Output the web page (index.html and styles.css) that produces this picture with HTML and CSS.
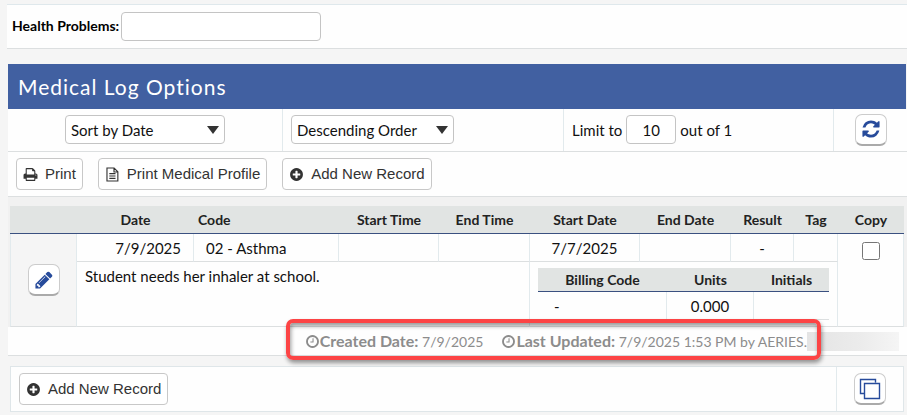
FILE: index.html
```html
<!DOCTYPE html>
<html lang="en">
  <head>
    <meta charset="utf-8" />
    <meta name="viewport" content="width=device-width, initial-scale=1" />
    <title>Medical Log</title>
    <link rel="stylesheet" href="styles.css">
  </head>
  <body>
    <svg class="sprite" width="0" height="0" aria-hidden="true">
      <symbol id="i-print" viewBox="0 0 1792 1792"><path d="M448 1536h896v-256h-896v256zm0-640h896v-384h-160q-40 0-68-28t-28-68v-160h-640v640zm1152 64q0-26-19-45t-45-19-45 19-19 45 19 45 45 19 45-19 19-45zm128 0v416q0 13-9.5 22.5t-22.5 9.5h-224v160q0 40-28 68t-68 28h-960q-40 0-68-28t-28-68v-160h-224q-13 0-22.5-9.5t-9.5-22.5v-416q0-79 56.5-135.5t135.5-56.5h64v-544q0-40 28-68t68-28h672q40 0 88 20t76 48l152 152q28 28 48 76t20 88v256h64q79 0 135.5 56.5t56.5 135.5z"/></symbol>
      <symbol id="i-plus" viewBox="0 0 1792 1792"><path d="M1344 960v-128q0-26-19-45t-45-19h-256v-256q0-26-19-45t-45-19h-128q-26 0-45 19t-19 45v256h-256q-26 0-45 19t-19 45v128q0 26 19 45t45 19h256v256q0 26 19 45t45 19h128q26 0 45-19t19-45v-256h256q26 0 45-19t19-45zm320-64q0 209-103 385.5t-279.5 279.5-385.5 103-385.5-103-279.5-279.5-103-385.5 103-385.5 279.5-279.5 385.5-103 385.5 103 279.5 279.5 103 385.5z"/></symbol>
      <symbol id="i-refresh" viewBox="0 0 1792 1792"><path d="M1639 1056q0 5-1 7-64 268-268 434.5t-478 166.5q-146 0-282.5-55t-243.5-157l-129 129q-19 19-45 19t-45-19-19-45v-448q0-26 19-45t45-19h448q26 0 45 19t19 45-19 45l-137 137q71 66 161 102t187 36q134 0 250-65t186-179q11-17 53-117 8-23 30-23h192q13 0 22.5 9.5t9.5 22.5zm25-800v448q0 26-19 45t-45 19h-448q-26 0-45-19t-19-45 19-45l138-138q-148-137-349-137-134 0-250 65t-186 179q-11 17-53 117-8 23-30 23h-199q-13 0-22.5-9.5t-9.5-22.5v-7q65-268 270-434.5t480-166.5q146 0 284 55.5t245 156.5l130-129q19-19 45-19t45 19 19 45z"/></symbol>
      <symbol id="i-pencil" viewBox="0 0 1792 1792"><path d="M491 1536l91-91-235-235-91 91v107h128v128h107zm523-928q0-22-22-22-10 0-17 7l-542 542q-7 7-7 17 0 22 22 22 10 0 17-7l542-542q7-7 7-17zm-54-192l416 416-832 832h-416v-416zm683 96q0 53-37 90l-166 166-416-416 166-165q36-38 90-38 53 0 91 38l235 234q37 39 37 91z"/></symbol>
      <symbol id="i-clock" viewBox="0 0 1792 1792"><path d="M1024 544v448q0 14-9 23t-23 9h-320q-14 0-23-9t-9-23v-64q0-14 9-23t23-9h224v-352q0-14 9-23t23-9h64q14 0 23 9t9 23zm416 352q0-148-73-273t-198-198-273-73-273 73-198 198-73 273 73 273 198 198 273 73 273-73 198-198 73-273zm224 0q0 209-103 385.5t-279.5 279.5-385.5 103-385.5-103-279.5-279.5-103-385.5 103-385.5 279.5-279.5 385.5-103 385.5 103 279.5 279.5 103 385.5z"/></symbol>
      <symbol id="i-file" viewBox="0 0 14 16"><path fill="none" stroke="currentColor" stroke-width="1.2" d="M1.1 1.1h7.6l4 4v9.8H1.1zM8.6 1.1v4.2h4.1M3.6 7.1h6.6M3.6 9.6h6.6M3.6 12.1h6.6"/></symbol>
      <symbol id="i-copy" viewBox="0 0 22 22"><path fill="none" stroke="currentColor" stroke-width="1.4" d="M5.5 15.5h-4v-14h15v3M5.5 5.5h15v15h-15z"/></symbol>
    </svg>

    <div class="problems">
      <label for="problems">Health Problems:</label>
      <input type="text" id="problems" class="field">
    </div>

    <main class="log">
      <h1>Medical Log Options</h1>

      <div class="options">
        <div class="option sort">
          <span class="select">
            <select class="field" aria-label="Sort by">
              <option>Sort by Date</option>
            </select>
          </span>
        </div>
        <div class="option order">
          <span class="select">
            <select class="field" aria-label="Sort order">
              <option>Descending Order</option>
            </select>
          </span>
        </div>
        <div class="option limit">
          <label for="limit">Limit to</label>
          <input type="text" id="limit" class="field" value="10">
          <span>out of 1</span>
        </div>
        <div class="option refresh">
          <button type="button" class="tile" aria-label="Refresh"><svg><use href="#i-refresh"/></svg></button>
        </div>
      </div>

      <div class="toolbar">
        <button type="button" class="btn"><svg><use href="#i-print"/></svg>Print</button>
        <button type="button" class="btn"><svg><use href="#i-file"/></svg>Print Medical Profile</button>
        <button type="button" class="btn"><svg><use href="#i-plus"/></svg>Add New Record</button>
      </div>

      <div class="records">
        <table class="grid">
          <colgroup>
            <col class="c-edit"><col class="c-date"><col class="c-code"><col class="c-stime"><col class="c-etime">
            <col class="c-sdate"><col class="c-edate"><col class="c-result"><col class="c-tag"><col class="c-copy">
          </colgroup>
          <thead>
            <tr>
              <th></th>
              <th>Date</th>
              <th class="left">Code</th>
              <th>Start Time</th>
              <th>End Time</th>
              <th>Start Date</th>
              <th>End Date</th>
              <th>Result</th>
              <th>Tag</th>
              <th>Copy</th>
            </tr>
          </thead>
          <tbody>
            <tr>
              <td rowspan="2" class="edit">
                <button type="button" class="tile" aria-label="Edit"><svg><use href="#i-pencil"/></svg></button>
              </td>
              <td class="date">7/9/2025</td>
              <td class="code">02 - Asthma</td>
              <td></td>
              <td></td>
              <td>7/7/2025</td>
              <td></td>
              <td>-</td>
              <td></td>
              <td rowspan="2" class="copy"><input type="checkbox" aria-label="Copy"></td>
            </tr>
            <tr>
              <td colspan="4" class="comment">Student needs her inhaler at school.</td>
              <td colspan="4" class="nested">
                <table class="billing">
                  <colgroup><col class="b-code"><col class="b-units"><col class="b-initials"></colgroup>
                  <thead>
                    <tr>
                      <th>Billing Code</th>
                      <th>Units</th>
                      <th>Initials</th>
                    </tr>
                  </thead>
                  <tbody>
                    <tr>
                      <td class="bill">-</td>
                      <td>0.000</td>
                      <td></td>
                    </tr>
                  </tbody>
                </table>
              </td>
            </tr>
          </tbody>
        </table>
      </div>

      <div class="stamp">
        <span class="stamp-item"><svg><use href="#i-clock"/></svg><b>Created Date:</b> 7/9/2025</span>
        <span class="stamp-item"><svg><use href="#i-clock"/></svg><b>Last Updated:</b> 7/9/2025 1:53 PM by AERIES.</span>
        <span class="redacted"></span>
        <span class="highlight"></span>
      </div>

      <div class="footer">
        <div class="footer-main">
          <button type="button" class="btn"><svg><use href="#i-plus"/></svg>Add New Record</button>
        </div>
        <div class="footer-copy">
          <button type="button" class="tile copy-tile" aria-label="Copy records"><svg><use href="#i-copy"/></svg></button>
        </div>
      </div>
    </main>
  </body>
</html>
```
FILE: styles.css
```css
* {
  box-sizing: border-box;
}
body {
  margin: 0;
  padding-top: 4px;
  background: #f5f5f5;
  color: #111;
  font: 15px/20px Lato, "Liberation Sans", sans-serif;
}
.sprite {
  position: absolute;
}
svg {
  fill: currentColor;
}
.field {
  height: 29px;
  border: 1px solid #c4c4c4;
  border-radius: 4px;
  background: white;
  color: #111;
  font: inherit;
}

.problems {
  display: flex;
  align-items: center;
  gap: 2px;
  height: 45px;
  margin-left: 7px;
  padding-left: 5px;
  border-top: 1px solid #dfe8ec;
  border-bottom: 1px solid #dcdfe0;
  background: #fefefe;
}
.problems label {
  padding-bottom: 2px;
  color: black;
  font-size: 14px;
  font-weight: bold;
}
.problems .field {
  width: 200px;
}

.log {
  margin: 15px 0 0 8px;
}
h1 {
  margin: 0 1px 0 0;
  padding: 10px 10px 9px;
  background: #4160a1;
  color: white;
  font-size: 21px;
  font-weight: normal;
  line-height: 26px;
  letter-spacing: 1px;
}

.options {
  display: grid;
  grid-template-columns: 275fr 281fr 270fr 73px;
  height: 43px;
  border-bottom: 1px solid #dcdfe0;
  background: #fefefe;
}
.option {
  display: flex;
  align-items: center;
  gap: 4px;
  padding: 0 8px 1px;
  border-right: 1px solid #e2eaed;
}
.option:last-child {
  border-right: 0;
}
.sort {
  justify-content: center;
}
.refresh {
  justify-content: center;
}
.select {
  position: relative;
}
.select::after {
  content: "";
  position: absolute;
  top: 11px;
  right: 6px;
  border: 6px solid transparent;
  border-top: 8px solid #333;
  border-bottom: 0;
  pointer-events: none;
}
.select select {
  appearance: none;
  display: block;
  width: 160px;
  padding: 0 24px 0 5px;
}
.order select {
  width: 163px;
}
#limit {
  width: 50px;
  text-align: center;
}

.tile {
  display: inline-flex;
  align-items: center;
  justify-content: center;
  width: 32px;
  height: 32px;
  padding: 0;
  border: 1px solid #ccc;
  border-bottom: 2px solid #aaa;
  border-radius: 7px;
  background: white;
  color: #274b9b;
}
.tile svg {
  width: 20px;
  height: 20px;
}
.copy-tile svg {
  width: 22px;
  height: 22px;
}

.toolbar {
  display: flex;
  align-items: center;
  gap: 15px;
  height: 45px;
  padding: 0 8px;
  border-bottom: 1px solid #dcdfe0;
  background: #fefefe;
}
.btn {
  display: inline-flex;
  align-items: center;
  gap: 7px;
  height: 32px;
  padding: 0 6px;
  border: 1px solid #c8c8c8;
  border-radius: 4px;
  background: white;
  color: #333;
  font: 15px/20px "Liberation Sans", Arial, sans-serif;
}
.btn svg {
  width: 15px;
  height: 15px;
}

.records {
  padding: 9px 3px 0 2px;
  background: #f1f1f1;
}
table {
  width: 100%;
  border-spacing: 0;
  table-layout: fixed;
}
th,
td {
  padding: 0;
  text-align: center;
}
th {
  height: 28px;
  border-bottom: 1px solid #3a5080;
  background: #e1e4e3;
  color: #222;
  font-size: 14px;
}
td {
  height: 28px;
  border-right: 1px solid #e2eaed;
  border-bottom: 1px solid #dcdfe0;
  background: #fefefe;
}
th.left {
  padding-left: 4px;
  text-align: left;
}
.c-edit { width: 67px; }
.c-date { width: 117px; }
.c-stime { width: 100px; }
.c-etime { width: 91px; }
.c-sdate { width: 110px; }
.c-edate { width: 91px; }
.c-result { width: 63px; }
.c-tag { width: 44px; }
.c-copy { width: 66px; }

td.edit {
  border-left: 1px solid #e2eaed;
  background: #f5f5f5;
}
td.date {
  padding-right: 12px;
  text-align: right;
}
td.code {
  padding-left: 12px;
  text-align: left;
}
td.copy {
  padding-top: 8px;
  vertical-align: top;
}
.copy input {
  display: block;
  width: 18px;
  height: 18px;
  margin: 0 auto;
}
td.comment {
  padding: 4px 8px;
  text-align: left;
  vertical-align: top;
}
td.nested {
  padding: 6px 8px;
  vertical-align: top;
}
.b-code { width: 129px; }
.b-units { width: 87px; }
.billing th {
  height: 24px;
}
.billing tr td:last-child {
  border-right: 0;
}
td.bill {
  padding-left: 16px;
  text-align: left;
}

.stamp {
  position: relative;
  display: flex;
  align-items: center;
  justify-content: flex-end;
  height: 29px;
  padding-right: 8px;
  border-bottom: 1px solid #dcdfe0;
  background: #fefefe;
  color: #8c8c8c;
  font-size: 14px;
}
.stamp b {
  font-size: 16px;
}
.stamp-item {
  margin-right: 18px;
  white-space: nowrap;
}
.stamp-item + .stamp-item {
  margin-right: 0;
}
.stamp svg {
  width: 15px;
  height: 15px;
  vertical-align: -2px;
}
.redacted {
  width: 92px;
  height: 19px;
  background: linear-gradient(to right, #e4e4e4, #ececec 60%, #f5f5f5);
}
.highlight {
  position: absolute;
  top: -8px;
  right: 86px;
  bottom: -5px;
  width: 535px;
  border: 4px solid #fc4445;
  border-radius: 7px;
  box-shadow: 1px 3px 4px rgba(0, 0, 0, 0.4), inset 1px 3px 4px rgba(0, 0, 0, 0.4);
}

.footer {
  display: flex;
  height: 46px;
  margin: 10px 3px 4px 2px;
  border: 1px solid #dfe6e9;
  background: #fefefe;
}
.footer-main,
.footer-copy {
  display: flex;
  align-items: center;
}
.footer-main {
  flex: 1;
  padding-left: 8px;
}
.footer-copy {
  justify-content: center;
  width: 67px;
  border-left: 1px solid #e2eaed;
}
```
